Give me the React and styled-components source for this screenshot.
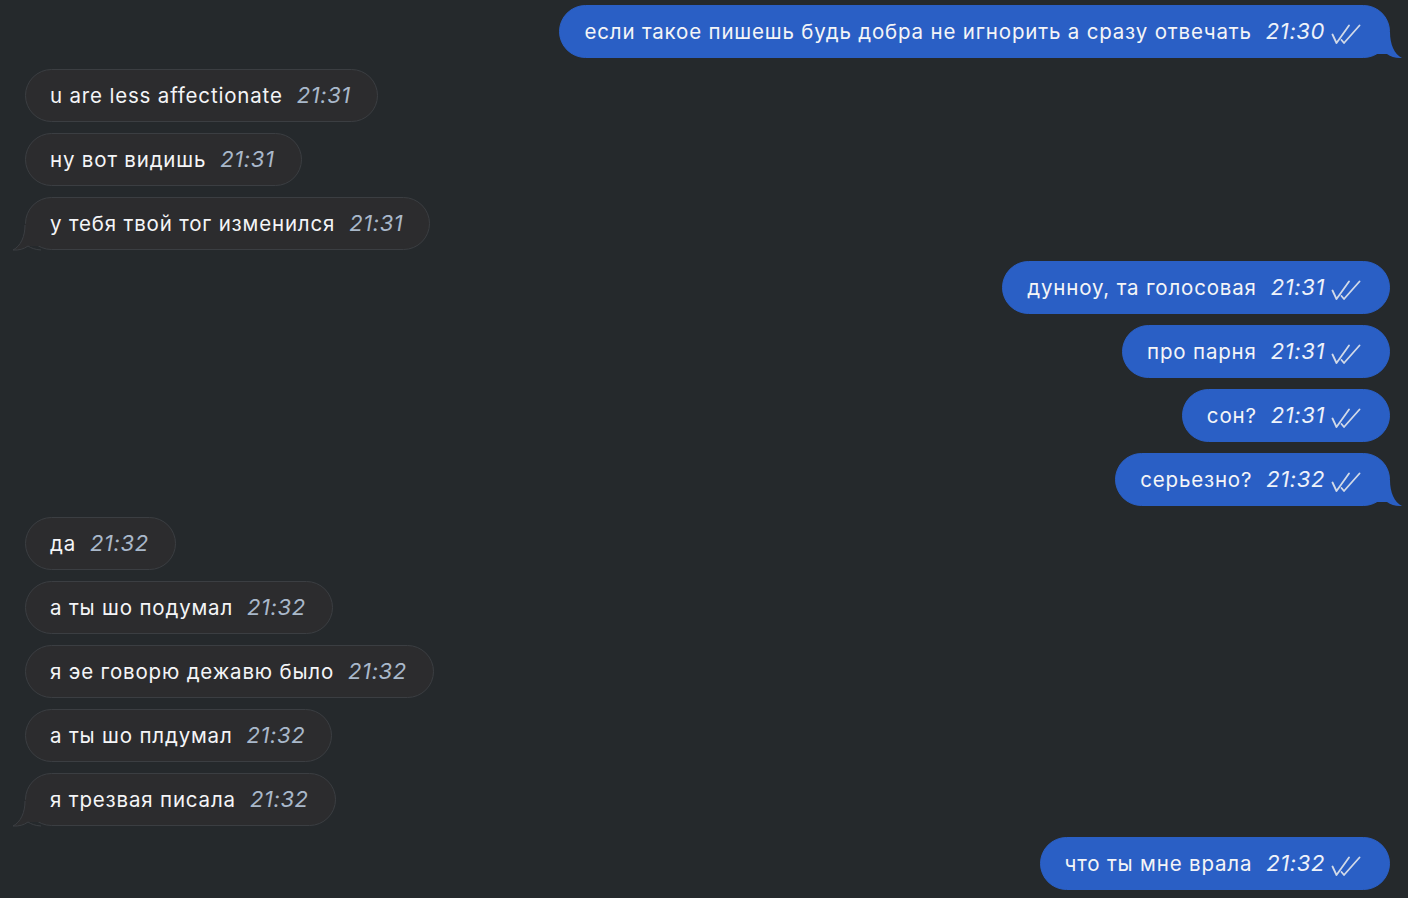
import styled, { createGlobalStyle } from "styled-components";

const GlobalStyle = createGlobalStyle`
  html, body {
    margin: 0;
    padding: 0;
    background: #25292c;
  }
  body {
    font-family: Inter, "Noto Sans", "Liberation Sans", sans-serif;
    -webkit-font-smoothing: antialiased;
  }
`;

const Chat = styled.div`
  width: 1408px;
  height: 898px;
  box-sizing: border-box;
  padding: 5px 18px 0 25px;
  display: flex;
  flex-direction: column;
  gap: 11px;
  overflow: hidden;
  background: #25292c;
`;

const Row = styled.div`
  display: flex;
  justify-content: ${(p) => (p.$out ? "flex-end" : "flex-start")};
`;

const Bubble = styled.div`
  position: relative;
  height: 53px;
  box-sizing: border-box;
  display: flex;
  align-items: baseline;
  padding: 0 ${(p) => (p.$out ? "28px" : "26px")} 0 24px;
  border-radius: 27px;
  background: ${(p) => (p.$out ? "#2a5fc5" : "#2c2c2e")};
  border: 1px solid ${(p) => (p.$out ? "#2a5fc5" : "#3b3e42")};
  color: #f4f5f7;
  font-size: 20.5px;
  letter-spacing: 0.82px;
  line-height: 51px;
  white-space: nowrap;
`;

const Text = styled.span``;

const Time = styled.span`
  margin-left: 14px;
  font-style: italic;
  font-size: 22px;
  letter-spacing: 0.6px;
  color: ${(p) => (p.$out ? "#eef2fa" : "#a9b8ca")};
`;

const Checks = styled.svg`
  margin-left: 6px;
  width: 30px;
  height: 20px;
  align-self: center;
  margin-top: 4px;
`;

const Tail = styled.svg`
  position: absolute;
  bottom: -1px;
  width: 30px;
  height: 26px;
  ${(p) =>
    p.$out
      ? "right: -13px;"
      : "left: -13px; transform: scaleX(-1);"}
  overflow: visible;
`;

const messages = [
  { out: true, text: "если такое пишешь будь добра не игнорить а сразу отвечать", time: "21:30", tail: true },
  { text: "u are less affectionate", time: "21:31" },
  { text: "ну вот видишь", time: "21:31" },
  { text: "у тебя твой тог изменился", time: "21:31", tail: true },
  { out: true, text: "дунноу, та голосовая", time: "21:31" },
  { out: true, text: "про парня", time: "21:31" },
  { out: true, text: "сон?", time: "21:31" },
  { out: true, text: "серьезно?", time: "21:32", tail: true },
  { text: "да", time: "21:32" },
  { text: "а ты шо подумал", time: "21:32" },
  { text: "я эе говорю дежавю было", time: "21:32" },
  { text: "а ты шо плдумал", time: "21:32" },
  { text: "я трезвая писала", time: "21:32", tail: true },
  { out: true, text: "что ты мне врала", time: "21:32" },
];

function DoubleCheck() {
  return (
    <Checks viewBox="0 0 30 20" fill="none" stroke="#d2dae8" strokeWidth="1.8" strokeLinecap="round" strokeLinejoin="round">
      <path d="M1.5 10.5 L5.5 19 L18 1.5" />
      <path d="M10.5 16 L13 19 L28.5 1.5" />
    </Checks>
  );
}

function BubbleTail({ out }) {
  const fill = out ? "#2a5fc5" : "#2c2c2e";
  return (
    <Tail $out={out} viewBox="0 0 30 26">
      <path d="M18 0 C18 12 22 22 30 26 C24 26.4 19 25 15 22 L4 22 L4 0 Z" fill={fill} />
      {!out && (
        <path
          d="M18 1 C18 12 22 22 30 26 C24 26.4 19 25 15 22 C12 24 8 25.6 2 26"
          fill="none"
          stroke="#3b3e42"
          strokeWidth="1"
        />
      )}
    </Tail>
  );
}

export default function App() {
  return (
    <>
      <GlobalStyle />
      <Chat>
        {messages.map((m, i) => (
          <Row key={i} $out={m.out}>
            <Bubble $out={m.out}>
              <Text>{m.text}</Text>
              <Time $out={m.out}>{m.time}</Time>
              {m.out && <DoubleCheck />}
              {m.tail && <BubbleTail out={m.out} />}
            </Bubble>
          </Row>
        ))}
      </Chat>
    </>
  );
}
